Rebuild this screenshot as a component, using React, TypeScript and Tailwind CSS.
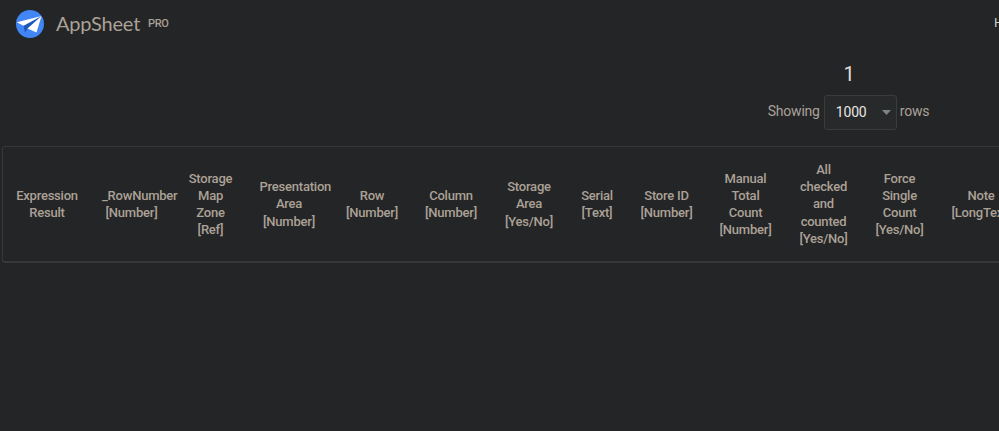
import React from 'react';

interface Column {
  lines: string[];
  width: string;
  inner?: string;
}

const columns: Column[] = [
  { lines: ['Expression', 'Result'], width: 'w-[88px]', inner: 'w-[64px]' },
  { lines: ['_RowNumber', '[Number]'], width: 'w-[81px]' },
  { lines: ['Storage', 'Map', 'Zone', '[Ref]'], width: 'w-[77px]' },
  { lines: ['Presentation', 'Area', '[Number]'], width: 'w-[80px]' },
  { lines: ['Row', '[Number]'], width: 'w-[86px]' },
  { lines: ['Column', '[Number]'], width: 'w-[72px]' },
  { lines: ['Storage', 'Area', '[Yes/No]'], width: 'w-[84px]' },
  { lines: ['Serial', '[Text]'], width: 'w-[52px]' },
  { lines: ['Store ID', '[Number]'], width: 'w-[87px]' },
  { lines: ['Manual', 'Total', 'Count', '[Number]'], width: 'w-[71px]' },
  { lines: ['All', 'checked', 'and', 'counted', '[Yes/No]'], width: 'w-[85px]' },
  { lines: ['Force', 'Single', 'Count', '[Yes/No]'], width: 'w-[67px]' },
  { lines: ['Note', '[LongText]'], width: 'w-[96px]' },
];

const Logo: React.FC = () => (
  <svg className="h-7 w-7 shrink-0" viewBox="0 0 28 28">
    <circle cx="14" cy="14" r="14" fill="#4285f4" />
    <path d="M7.5 15.8 25.5 6 12 18.2 9 22.5z" fill="#1c58b8" />
    <path d="M25.5 6 .8 12.2 7.5 15.8z" fill="#fff" />
    <path d="M25.5 6 11.5 18.4 20.5 22.5z" fill="#fff" />
  </svg>
);

const Header: React.FC = () => (
  <header className="flex h-[48px] shrink-0 items-center justify-between pl-4">
    <div className="flex items-center">
      <Logo />
      <span className="ml-3 w-[92px] pb-[3px] font-['Lato','Roboto',sans-serif] text-[20px] leading-6 tracking-[-0.2px]">
        AppSheet
      </span>
      <span className="pb-px text-[11px] leading-4 font-medium tracking-[-0.3px]">PRO</span>
    </div>
    <a className="w-[5px] overflow-hidden pb-[3px] text-[13px] leading-4 whitespace-nowrap text-[#d1cdc7]">Help</a>
  </header>
);

const RowLimit: React.FC = () => (
  <div className="flex h-[98px] shrink-0 flex-col items-center pt-[13px] pl-[698px]">
    <div className="pl-px text-[20px] leading-[26px] text-[#e1ded9]">1</div>
    <div className="mt-2 flex items-center text-[14px] tracking-[-0.2px]">
      <span className="pb-0.5">Showing</span>
      <button className="mr-[3px] ml-1 flex h-[35px] w-[73px] items-center justify-between rounded-[3px] border border-[#393c3e] bg-[#27292b] pr-[5px] pl-[11px] text-[#e8e6e3]">
        <span>1000</span>
        <svg className="h-[5px] w-[9px]" viewBox="0 0 9 5">
          <path d="M0 0h9L4.5 5z" fill="#7b8386" />
        </svg>
      </button>
      <span className="pb-0.5">rows</span>
    </div>
  </div>
);

export default function App() {
  return (
    <div className="flex h-screen flex-col overflow-hidden bg-[#232527] font-['Roboto',sans-serif] text-[#aca196]">
      <Header />
      <RowLimit />
      <div className="ml-[2px] flex h-[117px] w-[1100px] shrink-0 items-center rounded-[3px] border border-b-2 border-[#36393b]">
        {columns.map((column, index) => (
          <div key={index} className={`flex shrink-0 justify-center ${column.width}`}>
            <div className={`text-center text-[13px] leading-[17.2px] font-medium tracking-[-0.22px] whitespace-nowrap ${column.inner ?? 'w-[59px]'}`}>
              {column.lines.map((line) => (
                <div key={line}>{line}</div>
              ))}
            </div>
          </div>
        ))}
      </div>
    </div>
  );
}
